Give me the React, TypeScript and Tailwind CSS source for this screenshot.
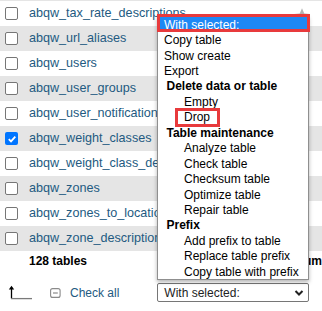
import React from "react";

const rows = [
  { name: "abqw_tax_rate_descriptions", checked: false },
  { name: "abqw_url_aliases", checked: false },
  { name: "abqw_users", checked: false },
  { name: "abqw_user_groups", checked: false },
  { name: "abqw_user_notifications", checked: false },
  { name: "abqw_weight_classes", checked: true },
  { name: "abqw_weight_class_descriptions", checked: false },
  { name: "abqw_zones", checked: false },
  { name: "abqw_zones_to_locations", checked: false },
  { name: "abqw_zone_descriptions", checked: false },
];

type Item = { t: string; k: "sel" | "opt" | "grp" | "sub" };
const items: Item[] = [
  { t: "With selected:", k: "sel" },
  { t: "Copy table", k: "opt" },
  { t: "Show create", k: "opt" },
  { t: "Export", k: "opt" },
  { t: "Delete data or table", k: "grp" },
  { t: "Empty", k: "sub" },
  { t: "Drop", k: "sub" },
  { t: "Table maintenance", k: "grp" },
  { t: "Analyze table", k: "sub" },
  { t: "Check table", k: "sub" },
  { t: "Checksum table", k: "sub" },
  { t: "Optimize table", k: "sub" },
  { t: "Repair table", k: "sub" },
  { t: "Prefix", k: "grp" },
  { t: "Add prefix to table", k: "sub" },
  { t: "Replace table prefix", k: "sub" },
  { t: "Copy table with prefix", k: "sub" },
];

function Checkbox({ checked }: { checked: boolean }) {
  if (checked) {
    return (
      <span className="flex h-[13px] w-[13px] items-center justify-center rounded-[2px] bg-[#0075ff]">
        <svg width="10" height="10" viewBox="0 0 10 10">
          <path d="M1.8 5.2 L4 7.4 L8.3 2.6" fill="none" stroke="white" strokeWidth="1.8" />
        </svg>
      </span>
    );
  }
  return <span className="block h-[13px] w-[13px] rounded-[2px] border border-[#767676] bg-white" />;
}

export default function App() {
  return (
    <div className="relative h-[311px] w-[322px] overflow-hidden bg-white font-['Liberation_Sans',Arial,sans-serif] text-[12.6px]">
      <div className="h-[1px] bg-[#e5e5e5]" />
      {rows.map((r, i) => (
        <div
          key={r.name}
          className={`flex h-[25px] items-center whitespace-nowrap ${i % 2 === 1 ? "bg-[#e5e5e5]" : "bg-white"}`}
        >
          <span className="ml-[5px]">
            <Checkbox checked={r.checked} />
          </span>
          <span className={`ml-[11px] text-[#235a81] ${i > 0 ? "w-[128px] overflow-hidden" : ""}`}>{r.name}</span>
        </div>
      ))}
      <div className="flex h-[20px] items-center whitespace-nowrap text-[12px] font-bold text-black">
        <span className="w-[297.5px] pl-[29px]">128 tables</span>
        <span>Sum</span>
      </div>
      <div className="mt-[12px] flex h-[19px] items-center whitespace-nowrap text-[12px]">
        <svg className="ml-[8px]" width="26" height="16" viewBox="0 0 26 16">
          <path d="M3.5 2 L3.5 13.5" stroke="black" strokeWidth="1.3" />
          <path d="M0.8 4.5 L3.5 0.8 L6.2 4.5 Z" fill="black" />
          <path d="M3 13.6 L24 13.6" stroke="#7a7a7a" strokeWidth="1.3" />
        </svg>
        <svg className="ml-[16px]" width="11" height="10" viewBox="0 0 11 10">
          <rect x="0.6" y="0.6" width="9.5" height="8.8" rx="2" fill="none" stroke="#8a8a8a" strokeWidth="1.1" />
          <path d="M3 5 L7.8 5" stroke="#8a8a8a" strokeWidth="1.2" />
        </svg>
        <span className="ml-[9px] text-[#235a81]">Check all</span>
        <div className="ml-[38px] flex h-[19px] w-[152px] items-center justify-between rounded-[2px] border border-[#767676] bg-white pl-[6px] pr-[4px] text-[#222]">
          <span>With selected:</span>
          <svg width="10" height="8" viewBox="0 0 10 8">
            <path d="M1.5 2 L5 5.5 L8.5 2" fill="none" stroke="#222" strokeWidth="2" />
          </svg>
        </div>
      </div>

      {/* favourite star partly hidden behind the menu */}
      <svg className="absolute left-[293px] top-[7px]" width="18" height="18" viewBox="0 0 24 24">
        <path d="M12 1.5 L15 8.5 L22.5 9.2 L16.8 14.2 L18.5 21.6 L12 17.8 L5.5 21.6 L7.2 14.2 L1.5 9.2 L9 8.5 Z" fill="#b3b3b3" />
      </svg>

      {/* open dropdown list */}
      <div className="absolute left-[157px] top-[16px] w-[152px] border border-[#8f8f8f] bg-white text-[12px] text-black shadow-[0_2px_4px_rgba(0,0,0,0.3)]">
        {items.map((it) => (
          <div
            key={it.t}
            className={`flex h-[15.44px] items-center whitespace-nowrap ${
              it.k === "sel"
                ? "bg-[#1e88f5] pl-[6px] text-white"
                : it.k === "opt"
                ? "pl-[6px]"
                : it.k === "grp"
                ? "pl-[8.5px] font-bold"
                : "pl-[26px]"
            }`}
          >
            {it.t}
          </div>
        ))}
      </div>

      {/* red annotation boxes */}
      <div className="absolute left-[157px] top-[14px] h-[18px] w-[153px] border-[3px] border-[#e83a3c]" />
      <div className="absolute left-[175px] top-[108px] h-[19px] w-[45px] border-[3px] border-[#e83a3c]" />
    </div>
  );
}
